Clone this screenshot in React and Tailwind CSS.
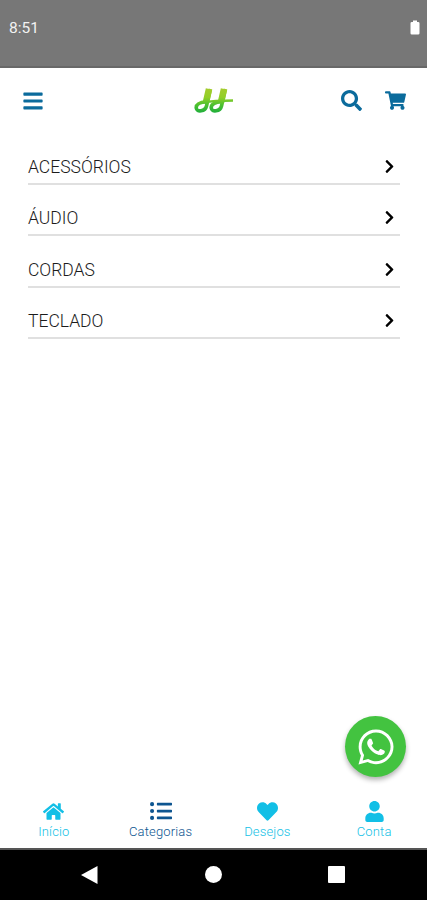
import {
  FaBars,
  FaChevronRight,
  FaHeart,
  FaHome,
  FaListUl,
  FaSearch,
  FaShoppingCart,
  FaUser,
  FaWhatsapp
} from "react-icons/fa";

const CATEGORIES = ["ACESSÓRIOS", "ÁUDIO", "CORDAS", "TECLADO"];

const TABS = [
  { label: "Início", icon: FaHome, size: 21, active: false },
  { label: "Categorias", icon: FaListUl, size: 22, active: true },
  { label: "Desejos", icon: FaHeart, size: 21, active: false },
  { label: "Conta", icon: FaUser, size: 21, active: false }
];

const StatusBar = () => (
  <div className="flex h-[68px] shrink-0 items-start justify-between border-b-2 border-[#686868] bg-[#777777] pt-[18px] pr-[7px] pl-[9px]">
    <span className="text-[15.5px] leading-[21px] text-[#f2f2f2]">8:51</span>
    <svg width="10" height="15" viewBox="0 0 10 15" className="mt-[2px]" fill="#fff">
      <path d="M3 .5h4V2h1.200q1.300 0 1.300 1.200v10q0 1.200-1.300 1.200H1.800q-1.300 0-1.300-1.200v-10Q.5 2 1.800 2H3z" />
    </svg>
  </div>
);

const Logo = () => (
  <svg width="40" height="28" viewBox="0 0 40 28" fill="none">
    <defs>
      <linearGradient id="logo" x1="0" y1="26" x2="0" y2="2" gradientUnits="userSpaceOnUse">
        <stop offset="0" stopColor="#1eae3c" />
        <stop offset="0.35" stopColor="#4fc12f" />
        <stop offset="0.65" stopColor="#92cf28" />
        <stop offset="1" stopColor="#a3cc2c" />
      </linearGradient>
    </defs>
    <g stroke="url(#logo)" strokeLinejoin="round">
      <path d="M16.500 2 12.500 19c-1.200 5.500-10 6.500-10.300 2C2 17.500 6 15.300 12.500 14.800" strokeWidth="3.600" />
      <path d="M31.500 2 27.500 19c-1.200 5.500-10 6.500-10.300 2C17 17.500 21 15.300 27.500 14.800" strokeWidth="3.600" />
      <path d="M15 2 12 15M30 2l-3 13" strokeWidth="6.500" />
      <path d="M9 15.500c8-1.500 18-2 30-2" strokeWidth="2.600" />
    </g>
  </svg>
);

const Header = () => (
  <header className="flex h-[65px] shrink-0 items-center justify-between pr-[21px] pl-[22px] text-[#0b6b9c]">
    <div className="flex w-[66px]">
      <FaBars size={22} />
    </div>
    <div className="pr-px">
      <Logo />
    </div>
    <div className="flex w-[66px] items-center justify-between pl-px">
      <FaSearch size={21} />
      <FaShoppingCart size={21} />
    </div>
  </header>
);

const CategoryRow = ({ name }) => (
  <li className="flex h-[51.5px] items-end justify-between border-b-2 border-[#e0e0e0] pr-[3px] pb-[6px]">
    <span className="text-[17.5px] leading-5 font-light text-[#1c1c1c]">{name}</span>
    <FaChevronRight size={15} className="mb-[3px] text-black" />
  </li>
);

const TabBar = () => (
  <nav className="grid h-[57px] shrink-0 grid-cols-4">
    {TABS.map(({ label, icon: Icon, size, active }) => (
      <div
        key={label}
        className={active ? "flex flex-col items-center text-[#0d5590]" : "flex flex-col items-center text-[#12bfe6]"}
      >
        <div className="flex h-[31px] items-end pl-px">
          <Icon size={size} />
        </div>
        <span className="mt-0.5 pl-px text-[13px] leading-4 font-light tracking-[0.15px]">{label}</span>
      </div>
    ))}
  </nav>
);

const SystemNav = () => (
  <div className="flex h-[52px] shrink-0 items-center justify-between border-t-2 border-[#555] bg-black pr-[82px] pb-px pl-[80px]">
    <svg width="19" height="20" viewBox="0 0 19 20" fill="#fff">
      <path d="M1 10 17.500 1v18z" />
    </svg>
    <div className="size-[17px] rounded-full bg-white" />
    <div className="size-[17px] rounded-[1px] bg-white" />
  </div>
);

const App = () => (
  <div className="relative flex h-[900px] w-[427px] flex-col overflow-hidden bg-white font-['Roboto',sans-serif]">
    <StatusBar />
    <Header />
    <ul className="flex-1 pr-[27px] pl-7">
      {CATEGORIES.map((name) => (
        <CategoryRow key={name} name={name} />
      ))}
    </ul>
    <TabBar />
    <SystemNav />
    <button className="absolute top-[716px] left-[345px] flex size-[61px] items-center justify-center rounded-full bg-[#43c340] text-white shadow-[0_3px_5px_rgba(0,0,0,0.3)]">
      <FaWhatsapp size={40} />
    </button>
  </div>
);

export default App;
